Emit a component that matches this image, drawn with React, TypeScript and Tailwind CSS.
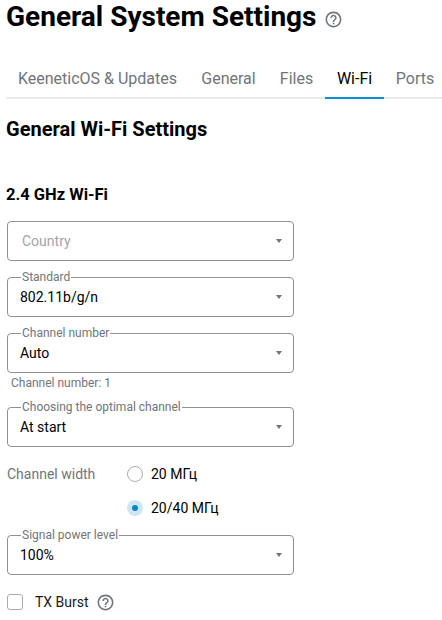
const HelpIcon = ({ className }: { className: string }) => (
  <svg className={className} viewBox="0 0 24 24" fill="currentColor">
    <path d="M11 18h2v-2h-2v2zm1-16C6.48 2 2 6.48 2 12s4.48 10 10 10 10-4.48 10-10S17.52 2 12 2zm0 18c-4.41 0-8-3.59-8-8s3.59-8 8-8 8 3.59 8 8-3.59 8-8 8zm0-14c-2.21 0-4 1.79-4 4h2c0-1.1.9-2 2-2s2 .9 2 2c0 2-3 1.75-3 5h2c0-2.25 3-2.5 3-5 0-2.21-1.79-4-4-4z" />
  </svg>
);

const tabs = [
  { name: 'KeeneticOS & Updates', width: 'w-[183px]' },
  { name: 'General', width: 'w-[79px]' },
  { name: 'Files', width: 'w-[57px]' },
  { name: 'Wi-Fi', width: 'w-[59px]', active: true },
  { name: 'Ports', width: 'w-[62px]' },
];

const SelectField = ({ label, value }: { label?: string; value?: string }) => (
  <div className="relative flex h-10 w-[287px] items-center justify-between rounded-[4px] border border-[#8c9196] pl-[12px] pr-[11px]">
    {label && value && (
      <span className="absolute -top-[8px] left-[13px] bg-white pl-[1px] pr-[1px] text-[12px] leading-[14px] text-[#70757a]">
        {label}
      </span>
    )}
    {value ? (
      <span className="text-[14px] text-black">{value}</span>
    ) : (
      <span className="pl-[2px] text-[14px] text-[#a2a6aa]">{label}</span>
    )}
    <span className="h-0 w-0 border-x-[3.5px] border-t-[4px] border-x-transparent border-t-[#70757a]" />
  </div>
);

const Radio = ({ label, checked }: { label: string; checked?: boolean }) => (
  <div className="flex h-[16px] items-center gap-[8px]">
    {checked ? (
      <span className="flex h-[16px] w-[16px] items-center justify-center rounded-full bg-[#cfe6f5]">
        <span className="h-[6px] w-[6px] rounded-full bg-[#0a84cc]" />
      </span>
    ) : (
      <span className="h-[16px] w-[16px] rounded-full border border-[#a8acb0]" />
    )}
    <span className="text-[14px] text-black">{label}</span>
  </div>
);

export default function App() {
  return (
    <div className="h-[620px] w-[442px] overflow-hidden bg-white font-['Roboto',sans-serif]">
      <div className="flex h-[34px] items-center pl-[6px]">
        <h1 className="text-[28px] font-bold leading-[34px] text-black">General System Settings</h1>
        <HelpIcon className="ml-[7px] mt-[4px] h-[19px] w-[19px] text-[#70757a]" />
      </div>

      <div className="ml-[6px] mt-[26px] flex h-[39px] border-b-2 border-[#e9eaeb]">
        {tabs.map((tab) => (
          <div
            key={tab.name}
            className={`-mb-[2px] flex h-[39px] shrink-0 items-center justify-center border-b-2 text-[16px] ${tab.width} ${
              tab.active ? 'border-[#0a8fd6] text-black' : 'border-transparent text-[#70757a]'
            }`}
          >
            {tab.name}
          </div>
        ))}
      </div>

      <h2 className="ml-[6px] mt-[18px] text-[20px] font-bold leading-[24px] text-black">General Wi-Fi Settings</h2>
      <h3 className="ml-[6px] mt-[44px] text-[16.5px] font-bold leading-[20px] text-black">2.4 GHz Wi-Fi</h3>

      <div className="ml-[7px] mt-[16px] flex flex-col">
        <SelectField label="Country" />
        <div className="mt-[16px]">
          <SelectField label="Standard" value="802.11b/g/n" />
        </div>
        <div className="mt-[16px]">
          <SelectField label="Channel number" value="Auto" />
        </div>
        <p className="ml-[4px] mt-[3px] text-[12px] leading-[14px] text-[#70757a]">Channel number: 1</p>
        <div className="mt-[17px]">
          <SelectField label="Choosing the optimal channel" value="At start" />
        </div>

        <div className="mt-[19px] flex">
          <span className="w-[120px] text-[14px] leading-[16px] text-[#70757a]">Channel width</span>
          <div className="flex flex-col gap-[18px]">
            <Radio label="20 МГц" />
            <Radio label="20/40 МГц" checked />
          </div>
        </div>

        <div className="mt-[19px]">
          <SelectField label="Signal power level" value="100%" />
        </div>

        <div className="mt-[19px] flex h-[16px] items-center">
          <span className="h-[16px] w-[16px] rounded-[3px] border border-[#a8acb0]" />
          <span className="ml-[12px] text-[14px] text-[#1a1a1a]">TX Burst</span>
          <HelpIcon className="ml-[7px] h-[19px] w-[19px] text-[#70757a]" />
        </div>
      </div>
    </div>
  );
}
